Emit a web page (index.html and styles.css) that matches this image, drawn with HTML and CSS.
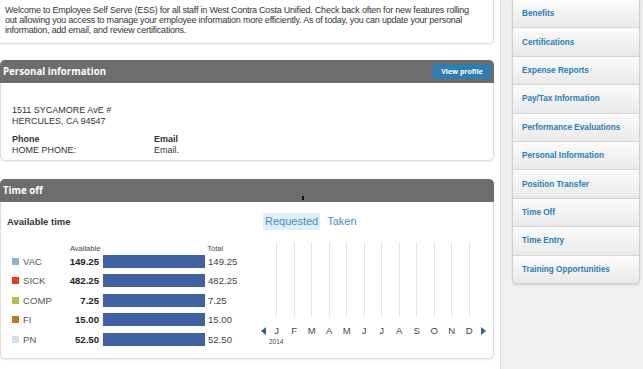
FILE: index.html
```html
<!DOCTYPE html>
<html lang="en">
<head>
    <meta charset="UTF-8">
    <meta name="viewport" content="width=device-width, initial-scale=1.0">
    <title>Employee Self Serve</title>
    <link rel="stylesheet" href="styles.css">
</head>
<body>
    <div class="page">
        <main class="content">
            <section class="card intro">
                <p>Welcome to Employee Self Serve (ESS) for all staff in West Contra Costa Unified. Check back often for new features rolling out allowing you access to manage your employee information more efficiently. As of today, you can update your personal information, add email, and review certifications.</p>
            </section>

            <section class="card">
                <div class="card-head">
                    <h2>Personal information</h2>
                    <button type="button" class="btn">View profile</button>
                </div>
                <div class="card-body profile">
                    <p class="address">1511 SYCAMORE AvE #<br>HERCULES, CA 94547</p>
                    <div class="contact">
                        <div class="contact-col">
                            <strong>Phone</strong>
                            <span>HOME PHONE:</span>
                        </div>
                        <div class="contact-col">
                            <strong>Email</strong>
                            <span>Email.</span>
                        </div>
                    </div>
                </div>
            </section>

            <section class="card">
                <div class="card-head">
                    <h2>Time off</h2>
                    <span class="cursor"></span>
                </div>
                <div class="card-body timeoff">
                    <div class="balances">
                        <h3>Available time</h3>
                        <div class="bal-head">
                            <span class="col-avail">Available</span>
                            <span class="col-total">Total</span>
                        </div>
                        <div class="bal-row">
                            <span class="swatch vac"></span><span class="code">VAC</span>
                            <span class="amount">149.25</span><span class="bar"></span><span class="total">149.25</span>
                        </div>
                        <div class="bal-row">
                            <span class="swatch sick"></span><span class="code">SICK</span>
                            <span class="amount">482.25</span><span class="bar"></span><span class="total">482.25</span>
                        </div>
                        <div class="bal-row">
                            <span class="swatch comp"></span><span class="code">COMP</span>
                            <span class="amount">7.25</span><span class="bar"></span><span class="total">7.25</span>
                        </div>
                        <div class="bal-row">
                            <span class="swatch fi"></span><span class="code">FI</span>
                            <span class="amount">15.00</span><span class="bar"></span><span class="total">15.00</span>
                        </div>
                        <div class="bal-row">
                            <span class="swatch pn"></span><span class="code">PN</span>
                            <span class="amount">52.50</span><span class="bar"></span><span class="total">52.50</span>
                        </div>
                    </div>

                    <div class="calendar">
                        <div class="tabs">
                            <span class="tab active">Requested</span>
                            <span class="tab">Taken</span>
                        </div>
                        <div class="chart">
                            <span class="gridline"></span><span class="gridline"></span><span class="gridline"></span>
                            <span class="gridline"></span><span class="gridline"></span><span class="gridline"></span>
                            <span class="gridline"></span><span class="gridline"></span><span class="gridline"></span>
                            <span class="gridline"></span><span class="gridline"></span><span class="gridline"></span>
                        </div>
                        <div class="months">
                            <span class="arrow left"></span>
                            <span class="month">J</span><span class="month">F</span><span class="month">M</span>
                            <span class="month">A</span><span class="month">M</span><span class="month">J</span>
                            <span class="month">J</span><span class="month">A</span><span class="month">S</span>
                            <span class="month">O</span><span class="month">N</span><span class="month">D</span>
                            <span class="arrow right"></span>
                        </div>
                        <div class="year">2014</div>
                    </div>
                </div>
            </section>
        </main>

        <aside class="sidebar">
            <ul class="menu">
                <li><a href="#">Benefits</a></li>
                <li><a href="#">Certifications</a></li>
                <li><a href="#">Expense Reports</a></li>
                <li><a href="#">Pay/Tax Information</a></li>
                <li><a href="#">Performance Evaluations</a></li>
                <li><a href="#">Personal Information</a></li>
                <li><a href="#">Position Transfer</a></li>
                <li><a href="#">Time Off</a></li>
                <li><a href="#">Time Entry</a></li>
                <li><a href="#">Training Opportunities</a></li>
            </ul>
        </aside>
    </div>
</body>
</html>
```

FILE: styles.css
```css
body {
    margin: 0;
    font-family: "Liberation Sans", Arial, sans-serif;
    color: #333333;
    background-color: #ffffff;
    overflow: hidden;
}
.page {
    display: flex;
    width: 643px;
    height: 369px;
}
.content {
    width: 494px;
    flex: none;
}
.card {
    background-color: #ffffff;
    border: 1px solid #dddddd;
    border-radius: 5px;
    box-shadow: 0 1px 2px rgba(0, 0, 0, 0.08);
    margin-bottom: 18px;
}
.card.intro {
    margin-top: -10px;
    margin-left: -3px;
    margin-bottom: 16px;
    padding: 14px 11px 7px 7px;
}
.intro p {
    margin: 0;
    font-size: 9px;
    letter-spacing: -0.22px;
    line-height: 10.2px;
}
.card-head {
    display: flex;
    align-items: center;
    justify-content: space-between;
    height: 23px;
    margin: -1px -1px 0 -1px;
    padding: 0 3px 0 3px;
    background-color: #6d6d6d;
    border-radius: 5px 5px 0 0;
    position: relative;
}
.card-head h2 {
    margin: 0;
    font-family: "Open Sans", sans-serif;
    font-size: 9.7px;
    font-weight: bold;
    color: #ffffff;
}
.btn {
    height: 15px;
    padding: 0 8px;
    border: none;
    background-color: #2e7db3;
    color: #ffffff;
    font-family: "Open Sans", sans-serif;
    font-size: 7px;
    font-weight: bold;
    cursor: pointer;
}
.cursor {
    position: absolute;
    left: 302px;
    top: 17px;
    width: 2px;
    height: 4px;
    background-color: #111111;
}
.profile {
    padding: 22px 11px 4px;
    font-size: 9px;
    line-height: 11px;
}
.address {
    margin: 0 0 7px;
}
.contact {
    display: flex;
}
.contact-col {
    display: flex;
    flex-direction: column;
    width: 142px;
}
.contact-col strong {
    font-weight: bold;
}
.timeoff {
    display: flex;
    padding-bottom: 9px;
}
.balances {
    width: 250px;
}
.balances h3 {
    margin: 14px 0 0 6px;
    font-size: 9.5px;
    font-weight: bold;
    line-height: 12px;
}
.bal-head {
    display: flex;
    margin-top: 18px;
    font-size: 7.5px;
    line-height: 6px;
    color: #444444;
}
.col-avail {
    margin-left: 69px;
}
.col-total {
    margin-left: 107px;
}
.bal-row {
    display: flex;
    align-items: center;
    height: 19.5px;
    padding-left: 11px;
    font-size: 9.6px;
}
.swatch {
    width: 7px;
    height: 7px;
    margin-right: 4px;
}
.vac { background-color: #8fb0cf; }
.sick { background-color: #e63b1f; }
.comp { background-color: #a8c34a; }
.fi { background-color: #b47b22; }
.pn { background-color: #cfdff0; }
.code {
    width: 46px;
    color: #555555;
}
.amount {
    width: 30px;
    text-align: right;
    font-weight: bold;
    color: #222222;
}
.bar {
    width: 102px;
    height: 13px;
    margin-left: 4px;
    background-color: #41609f;
}
.total {
    margin-left: 3px;
    color: #444444;
}
.calendar {
    width: 242px;
}
.tabs {
    display: flex;
    gap: 5px;
    margin: 11px 0 0 12px;
}
.tab {
    padding: 2px 2px;
    font-size: 11px;
    line-height: 13px;
    color: #3f8fbb;
}
.tab.active {
    background-color: #e2eef7;
}
.chart {
    display: flex;
    margin: 12px 0 0 17px;
    height: 75px;
}
.gridline {
    width: 17.5px;
    display: flex;
    justify-content: center;
}
.gridline::before {
    content: "";
    width: 1px;
    background-color: #e4e4e4;
}
.months {
    display: flex;
    align-items: center;
    margin: 8px 0 0 10px;
    height: 12px;
    font-size: 9.6px;
    color: #444444;
}
.month {
    width: 17.5px;
    text-align: center;
}
.arrow {
    width: 0;
    height: 0;
    border-top: 4px solid transparent;
    border-bottom: 4px solid transparent;
}
.arrow.left {
    border-right: 5px solid #3b5a9a;
    margin-right: 2px;
}
.arrow.right {
    border-left: 5px solid #3b5a9a;
    margin-left: 3px;
}
.year {
    margin: 0 0 0 18px;
    font-size: 6.5px;
    line-height: 10px;
    color: #444444;
}
.sidebar {
    flex: 1;
    margin-left: 6px;
    border-left: 1px solid #dcdcdc;
    background-color: #f0f0f0;
    padding: 0 3px 0 11px;
}
.menu {
    list-style: none;
    margin: 0;
    padding: 0;
    border: 1px solid #d0d0d0;
    border-top: none;
    border-radius: 0 0 4px 4px;
    box-shadow: 0 1px 2px rgba(0, 0, 0, 0.12);
    overflow: hidden;
}
.menu li {
    height: 27.4px;
    border-bottom: 1px solid #d6d6d6;
    background: linear-gradient(#fbfbfb, #e9e9e9);
}
.menu li:last-child {
    border-bottom: none;
}
.menu a {
    display: flex;
    align-items: center;
    height: 100%;
    padding-left: 9px;
    font-size: 8.2px;
    font-weight: bold;
    color: #2a7cb5;
    text-decoration: none;
}
```
